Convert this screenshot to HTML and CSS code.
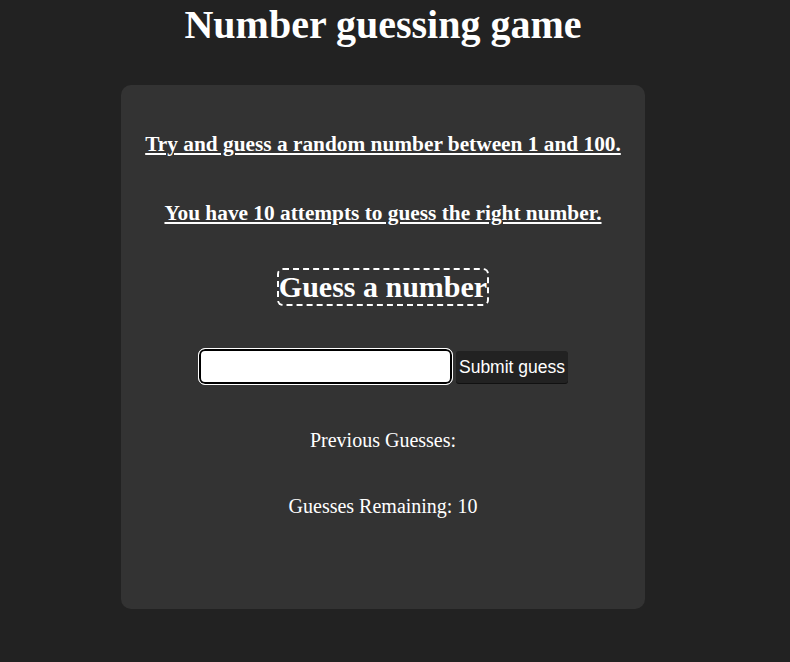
FILE: index.html
```html
<!DOCTYPE html>
<html>
<head>
<meta charset="utf-8">
<title>Number guessing game</title>
<link rel="stylesheet" href="styles.css">
</head>
<body>
<div class="page">
  <h1 class="title">Number guessing game</h1>
  <div class="card">
    <p class="intro">Try and guess a random number between 1 and 100.</p>
    <p class="intro intro-second">You have 10 attempts to guess the right number.</p>
    <div class="label-row"><h2 class="label">Guess a number</h2></div>
    <div class="form-row">
      <input class="guess-input" type="text">
      <button class="submit">Submit guess</button>
    </div>
    <p class="info info-prev">Previous Guesses:</p>
    <p class="info info-remaining">Guesses Remaining: 10</p>
  </div>
</div>
</body>
</html>
```

FILE: styles.css
```css
html, body {
  margin: 0;
  padding: 0;
  background: #222222;
}
body {
  font-family: "Liberation Serif", "Times New Roman", serif;
  color: #ffffff;
}
.page {
  width: 766px;
  display: flex;
  flex-direction: column;
  align-items: center;
}
.title {
  margin: 2px 0 0;
  font-size: 40px;
  line-height: 46px;
  font-weight: bold;
  text-align: center;
}
.card {
  margin-top: 37px;
  width: 524px;
  height: 524px;
  box-sizing: border-box;
  background: #333333;
  border-radius: 10px;
  display: flex;
  flex-direction: column;
  align-items: center;
  padding-top: 47px;
}
.intro {
  margin: 0;
  font-size: 21.33px;
  line-height: 24px;
  font-weight: bold;
  text-decoration: underline;
  text-align: center;
}
.intro-second {
  margin-top: 45px;
}
.label-row {
  margin-top: 43px;
}
.label {
  margin: 0;
  font-size: 30px;
  line-height: 34px;
  font-weight: bold;
  border: 2px dashed #ffffff;
  border-radius: 6px;
  padding: 0;
}
.form-row {
  margin-top: 42px;
  display: flex;
  align-items: center;
  gap: 3px;
}
.guess-input {
  width: 255px;
  height: 37px;
  box-sizing: border-box;
  background: #ffffff;
  border: 1px solid #ffffff;
  border-radius: 7px;
  box-shadow: inset 0 0 0 2px #000000;
  outline: none;
  margin: 0;
}
.submit {
  height: 32px;
  margin: 1px 0 0;
  padding: 0 3px;
  font-family: "Liberation Sans", Arial, sans-serif;
  font-size: 17.5px;
  color: #ffffff;
  background: #222222;
  border: none;
  border-radius: 3px;
  box-shadow: 0 1px 0 #111111;
}
.info {
  margin: 0;
  font-size: 20px;
  line-height: 23px;
  text-align: center;
}
.info-prev {
  margin-top: 44px;
}
.info-remaining {
  margin-top: 43px;
}
```
